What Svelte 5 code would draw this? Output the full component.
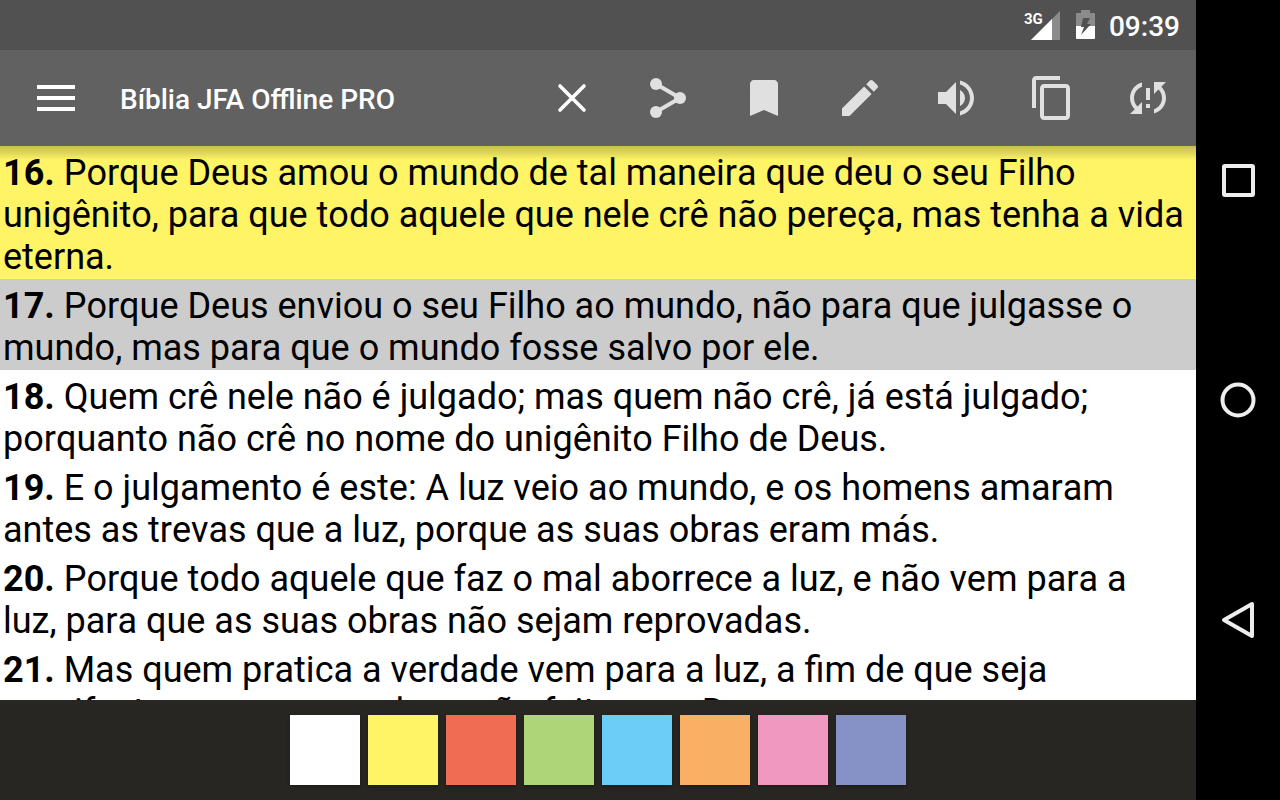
<script lang="ts">
    type Verse = { number: number, text: string, state?: string }

    const actions = [
        { label: "Compartilhar", path: "" },
        { label: "Favorito", path: "M17 3H7c-1.1 0-1.99.9-1.99 2L5 21l7-3 7 3V5c0-1.1-.9-2-2-2z" },
        { label: "Anotar", path: "M3 17.25V21h3.75L17.81 9.94l-3.75-3.75L3 17.25zM20.71 7.04c.39-.39.39-1.02 0-1.41l-2.34-2.34c-.39-.39-1.02-.39-1.41 0l-1.83 1.83 3.75 3.75 1.83-1.83z" },
        { label: "Ouvir", path: "M3 9v6h4l5 5V4L7 9H3zm13.5 3c0-1.77-1.02-3.29-2.5-4.03v8.05c1.48-.73 2.5-2.25 2.5-4.02zM14 3.23v2.06c2.89.86 5 3.54 5 6.71s-2.11 5.85-5 6.71v2.06c4.01-.91 7-4.49 7-8.77s-2.99-7.86-7-8.77z" },
        { label: "Copiar", path: "M16 1H4c-1.1 0-2 .9-2 2v14h2V3h12V1zm3 4H8c-1.1 0-2 .9-2 2v14c0 1.1.9 2 2 2h11c1.1 0 2-.9 2-2V7c0-1.1-.9-2-2-2zm0 16H8V7h11v14z" },
        { label: "Sincronizar", path: "M3 12c0 2.21.91 4.2 2.36 5.64L3 20h6v-6l-2.24 2.24C5.68 15.15 5 13.66 5 12c0-2.61 1.67-4.83 4-5.65V4.26C5.55 5.15 3 8.27 3 12zm8 5h2v-2h-2v2zM21 4h-6v6l2.24-2.24C18.32 8.85 19 10.34 19 12c0 2.61-1.67 4.83-4 5.65v2.09c3.45-.89 6-4.01 6-7.74 0-2.21-.91-4.2-2.36-5.64L21 4zm-10 9h2V7h-2v6z" }
    ]

    const colors = [
        { name: "Branco", value: "#ffffff" },
        { name: "Amarelo", value: "#fef466" },
        { name: "Vermelho", value: "#f06c53" },
        { name: "Verde", value: "#aed577" },
        { name: "Azul", value: "#6ccef6" },
        { name: "Laranja", value: "#f9af64" },
        { name: "Rosa", value: "#f198c0" },
        { name: "Roxo", value: "#8692c6" }
    ]

    let verses: Verse[] = $state([
        { number: 16, text: "Porque Deus amou o mundo de tal maneira que deu o seu Filho unigênito, para que todo aquele que nele crê não pereça, mas tenha a vida eterna.", state: "marked" },
        { number: 17, text: "Porque Deus enviou o seu Filho ao mundo, não para que julgasse o mundo, mas para que o mundo fosse salvo por ele.", state: "selected" },
        { number: 18, text: "Quem crê nele não é julgado; mas quem não crê, já está julgado; porquanto não crê no nome do unigênito Filho de Deus." },
        { number: 19, text: "E o julgamento é este: A luz veio ao mundo, e os homens amaram antes as trevas que a luz, porque as suas obras eram más." },
        { number: 20, text: "Porque todo aquele que faz o mal aborrece a luz, e não vem para a luz, para que as suas obras não sejam reprovadas." },
        { number: 21, text: "Mas quem pratica a verdade vem para a luz, a fim de que seja manifesto que as suas obras são feitas em Deus." }
    ])

    function clearSelection() {
        for (const verse of verses) {
            if (verse.state == "selected") {
                verse.state = undefined
            }
        }
    }
</script>

<div class="screen">
    <div class="app">
        <div class="statusBar">
            <svg class="signal" width="38" height="32" viewBox="0 0 38 32">
                <path d="M37 2v29H8z" fill="#8b8b8b" />
                <path d="M29 10v21H8z" fill="#fff" />
                <text x="1" y="15">3G</text>
            </svg>
            <svg class="battery" width="19" height="30" viewBox="0 0 19 30">
                <path d="M5 0h9v3h4q1 0 1 1v12H0V4q0-1 1-1h4z" fill="#8b8b8b" />
                <path d="M0 16h19v12q0 1-1 1H1q-1 0-1-1z" fill="#fff" />
                <path d="M7 8h7l-3 6h4L5 25l3-8H5z" fill="#515151" />
            </svg>
            <time>09:39</time>
        </div>

        <header class="toolbar">
            <button class="menu" aria-label="Menu">
                <svg width="38" height="26" viewBox="0 0 38 26">
                    <path d="M0 0h38v4H0zM0 11h38v4H0zM0 22h38v4H0z" fill="#fff" />
                </svg>
            </button>
            <h1>Bíblia JFA Offline PRO</h1>
            <button class="action" aria-label="Fechar" onclick={clearSelection}>
                <svg width="48" height="48" viewBox="0 0 48 48">
                    <path d="M12 12l24 24M36 12L12 36" stroke="#fff" stroke-width="3.6" stroke-linecap="round" />
                </svg>
            </button>
            {#each actions as action}
            <button class="action" aria-label={action.label}>
                <svg width="48" height="48" viewBox="0 0 24 24" fill="#e0e0e0">
                    {#if action.path}
                    <path d={action.path} />
                    {:else}
                    <path d="M6 5l12 7-12 7" fill="none" stroke="#e0e0e0" stroke-width="2" />
                    <circle cx="6" cy="5" r="3" />
                    <circle cx="18" cy="12" r="3" />
                    <circle cx="6" cy="19" r="3" />
                    {/if}
                </svg>
            </button>
            {/each}
        </header>

        <main>
            {#each verses as verse}
            <p class="verse {verse.state ?? ''}"><strong>{verse.number}.</strong> {verse.text}</p>
            {/each}
        </main>

        <div class="palette">
            {#each colors as color}
            <button class="swatch" aria-label={color.name} style="background-color: {color.value}"></button>
            {/each}
        </div>
    </div>

    <nav>
        <button aria-label="Recentes">
            <svg width="36" height="36" viewBox="0 0 36 36">
                <rect x="4" y="4" width="29" height="29" rx="1" />
            </svg>
        </button>
        <button aria-label="Início">
            <svg width="36" height="36" viewBox="0 0 36 36">
                <circle cx="18" cy="18" r="15.5" />
            </svg>
        </button>
        <button aria-label="Voltar">
            <svg width="36" height="40" viewBox="0 0 36 40">
                <path d="M4 20L32 4v32z" />
            </svg>
        </button>
    </nav>
</div>

<style>
    :global(body) {
        margin: 0;
    }

    .screen {
        display: flex;
        height: 100vh;
        background-color: black;
        font-family: Roboto, sans-serif;
    }

    .app {
        flex: 1;
        min-width: 0;
        display: flex;
        flex-direction: column;
        background-color: white;
    }

    button {
        display: flex;
        align-items: center;
        justify-content: center;
        padding: 0;
        border: none;
        background: none;
        cursor: pointer;
    }

    .statusBar {
        display: flex;
        align-items: center;
        justify-content: flex-end;
        height: 50px;
        padding-right: 16px;
        background-color: #515151;
        color: white;
    }

    .signal {
        margin-right: 15px;
    }

    .signal text {
        font-size: 15px;
        font-weight: 700;
        fill: white;
    }

    .battery {
        margin-right: 14px;
    }

    time,
    h1 {
        padding-top: 4px;
        font-size: 28px;
        font-weight: 500;
        line-height: 32px;
    }

    .toolbar {
        position: relative;
        display: flex;
        align-items: center;
        height: 96px;
        background-color: #616161;
        color: white;
    }

    /* shadow that falls over the first verse */
    .toolbar::after {
        content: "";
        position: absolute;
        top: 100%;
        left: 0;
        right: 0;
        height: 14px;
        background: linear-gradient(rgba(0, 0, 0, 0.22), rgba(0, 0, 0, 0.12) 50%, rgba(0, 0, 0, 0));
        pointer-events: none;
    }

    .menu {
        width: 112px;
        height: 96px;
    }

    .action {
        width: 96px;
        height: 96px;
    }

    h1 {
        flex: 1;
        margin: 0;
        padding-left: 8px;
    }

    main {
        flex: 1;
        min-height: 0;
        overflow: hidden;
    }

    .verse {
        margin: 0;
        padding: 6px 10px 1px 3px;
        font-size: 36px;
        font-kerning: none;
        line-height: 42px;
        color: black;
    }

    .marked {
        background-color: #fef466;
    }

    .selected {
        background-color: #cccccc;
    }

    .palette {
        display: flex;
        align-items: center;
        justify-content: center;
        gap: 8px;
        height: 100px;
        background-color: #272622;
    }

    .swatch {
        width: 70px;
        height: 70px;
        box-shadow: 0 2px 4px rgba(0, 0, 0, 0.3);
    }

    nav {
        display: flex;
        flex-direction: column;
        justify-content: center;
        width: 84px;
    }

    nav button {
        height: 220px;
    }

    nav svg {
        fill: none;
        stroke: #eeeeee;
        stroke-width: 4px;
        stroke-linejoin: round;
    }
</style>
